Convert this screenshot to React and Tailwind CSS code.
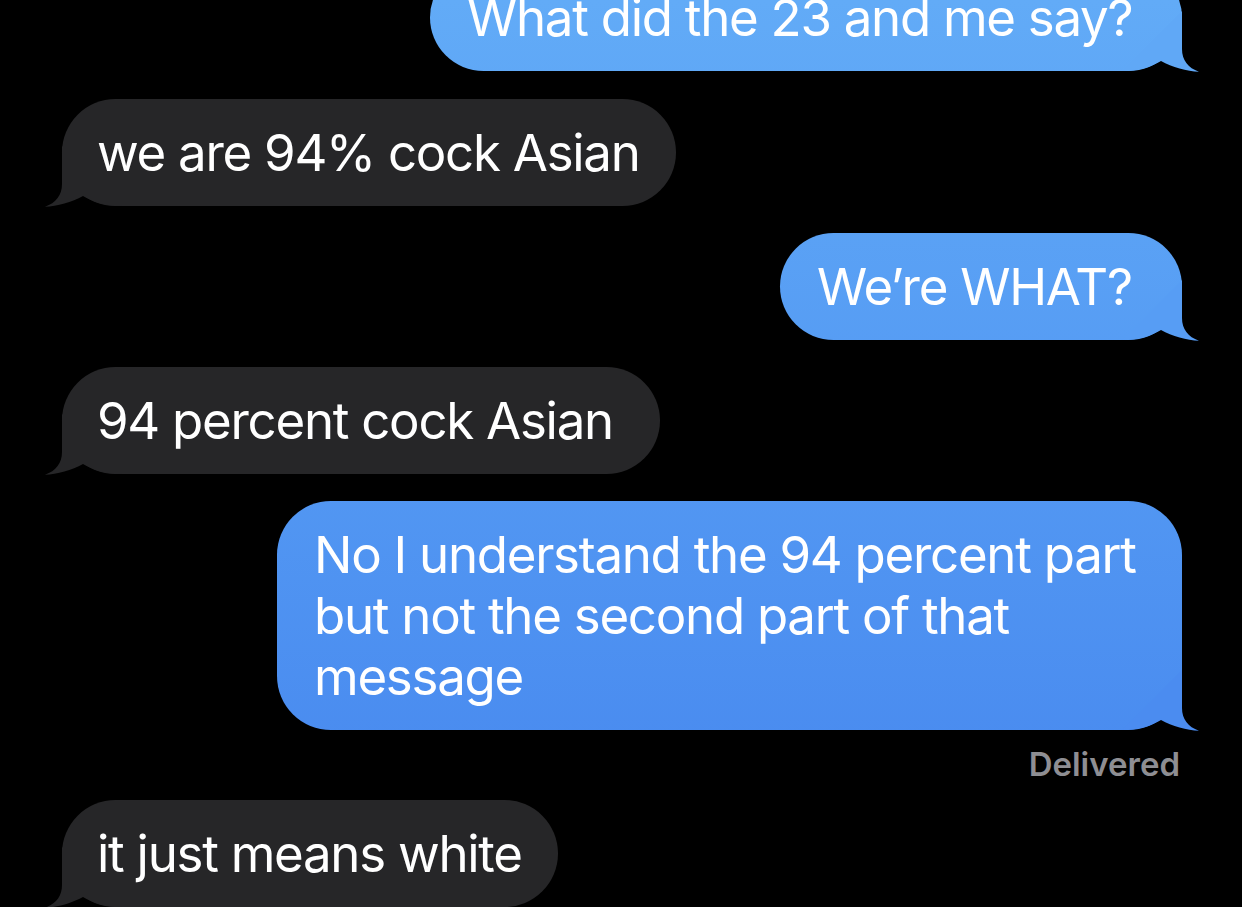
import React from "react";

const H = 907;
function blueAt(y) {
  const t = Math.max(0, Math.min(1, y / H));
  const r = Math.round(98 + (69 - 98) * t);
  const g = Math.round(171 + (133 - 171) * t);
  const b = Math.round(247 + (238 - 247) * t);
  return `rgb(${r},${g},${b})`;
}

const TAIL_PATH =
  "M60 0 L60 38 C60 49 66 57 77 60.7 C65 60.5 50 56 39 50 C31 55 20 59.5 0 60 Z";

function Tail({ side, fill }) {
  if (side === "right") {
    return (
      <svg
        className="absolute right-[-18px] bottom-[-1px]"
        width="78"
        height="61"
        viewBox="0 0 78 61"
      >
        <path d={TAIL_PATH} fill={fill} />
      </svg>
    );
  }
  return (
    <svg
      className="absolute left-[-18px] bottom-[-1px] -scale-x-100"
      width="78"
      height="61"
      viewBox="0 0 78 61"
    >
      <path d={TAIL_PATH} fill={fill} />
    </svg>
  );
}

function Sent({ children, className, bottom }) {
  return (
    <div
      className={
        "relative self-end mr-[60px] rounded-[54px] bg-fixed bg-linear-to-b from-[#62abf7] to-[#4585ee] py-[23px] pl-[37px] text-white whitespace-nowrap " +
        className
      }
    >
      <Tail side="right" fill={blueAt(bottom)} />
      <span className="relative">{children}</span>
    </div>
  );
}

function Received({ children, className }) {
  return (
    <div
      className={
        "relative self-start ml-[62px] rounded-[54px] bg-[#262628] py-[23px] pl-[35px] text-white whitespace-nowrap " +
        className
      }
    >
      <Tail side="left" fill="#262628" />
      <span className="relative">{children}</span>
    </div>
  );
}

export default function App() {
  return (
    <div className="w-full h-[907px] overflow-hidden bg-black [font-family:Inter,'Noto_Sans',sans-serif] text-[51px] leading-[61px] tracking-[-0.025em]">
      <div className="flex flex-col">
        <Sent className="-mt-[36px] w-[752px]" bottom={71}>
          What did the 23 and me say?
        </Sent>
        <Received className="mt-[28px] w-[614px]">we are 94% cock Asian</Received>
        <Sent className="mt-[27px] w-[402px]" bottom={340}>
          We’re WHAT?
        </Sent>
        <Received className="mt-[27px] w-[598px]">94 percent cock Asian</Received>
        <Sent className="mt-[27px] w-[905px]" bottom={730}>
          No I understand the 94 percent part
          <br />
          but not the second part of that
          <br />
          message
        </Sent>
        <div className="self-end mr-[62px] mt-[15px] text-[33px] leading-[38px] font-semibold tracking-normal text-[#8e8e93]">
          Delivered
        </div>
        <Received className="mt-[17px] w-[496px]">it just means white</Received>
      </div>
    </div>
  );
}
